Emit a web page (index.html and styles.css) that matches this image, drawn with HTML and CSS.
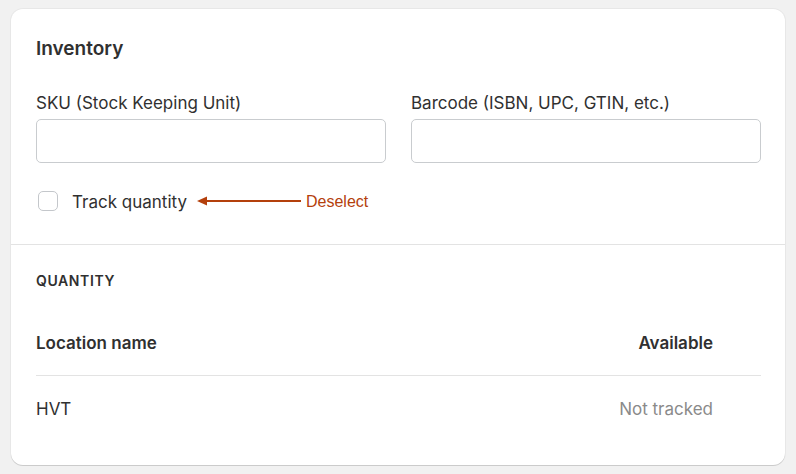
FILE: index.html
```html
<!DOCTYPE html>
<html lang="en">
<head>
    <meta charset="UTF-8">
    <meta name="viewport" content="width=device-width, initial-scale=1.0">
    <title>Inventory</title>
    <link rel="stylesheet" href="styles.css">
</head>
<body>
    <div class="card">
        <div class="section">
            <h2>Inventory</h2>
            <div class="fields">
                <div class="field">
                    <label>SKU (Stock Keeping Unit)</label>
                    <div class="input"></div>
                </div>
                <div class="field">
                    <label>Barcode (ISBN, UPC, GTIN, etc.)</label>
                    <div class="input"></div>
                </div>
            </div>
            <div class="check-row">
                <span class="checkbox"></span>
                <span class="check-label">Track quantity</span>
                <svg class="arrow" width="104" height="10" viewBox="0 0 104 10">
                    <path d="M0 5 L10 0.5 L10 9.5 Z" fill="#b4400c"/>
                    <line x1="8" y1="5" x2="104" y2="5" stroke="#b4400c" stroke-width="2"/>
                </svg>
                <span class="note">Deselect</span>
            </div>
        </div>
        <div class="section quantity">
            <h3>Quantity</h3>
            <div class="table">
                <div class="row head">
                    <span>Location name</span>
                    <span class="right">Available</span>
                </div>
                <div class="row">
                    <span>HVT</span>
                    <span class="right muted">Not tracked</span>
                </div>
            </div>
        </div>
    </div>
</body>
</html>
```

FILE: styles.css
```css
body {
    margin: 0;
    padding: 9px 11px;
    background-color: #f1f1f1;
    font-family: Inter, "Noto Sans", sans-serif;
    color: #303030;
}

.card {
    background-color: #fff;
    border-radius: 12px;
    box-shadow: 0 1px 0 rgba(0, 0, 0, 0.12), 0 0 0 1px rgba(0, 0, 0, 0.04);
    height: 456px;
    box-sizing: border-box;
}

.section {
    padding: 28px 24px 33px 25px;
}

h2 {
    margin: 0;
    font-size: 19px;
    font-weight: 600;
    line-height: 24px;
}

.fields {
    display: grid;
    grid-template-columns: 1fr 1fr;
    gap: 25px;
    margin-top: 32px;
}

.field label {
    display: block;
    font-size: 17px;
    line-height: 20px;
    margin-bottom: 6px;
}

.input {
    height: 44px;
    box-sizing: border-box;
    border: 1px solid #c9cccf;
    border-radius: 5px;
}

.check-row {
    display: flex;
    align-items: center;
    margin-top: 28px;
    height: 20px;
}

.checkbox {
    width: 20px;
    height: 20px;
    box-sizing: border-box;
    border: 1.5px solid #c4c7cb;
    border-radius: 5px;
    margin-left: 2px;
}

.check-label {
    font-size: 17px;
    margin-left: 14px;
    position: relative;
    top: 1px;
}

.arrow {
    margin-left: 10px;
}

.note {
    font-family: "Liberation Sans", Arial, sans-serif;
    font-size: 16px;
    color: #b4400c;
    margin-left: 5px;
    position: relative;
    top: 1px;
}

.quantity {
    border-top: 1px solid #e3e3e3;
    padding-top: 28px;
    padding-bottom: 0;
}

h3 {
    margin: 0 0 22px;
    font-size: 14px;
    font-weight: 600;
    line-height: 16px;
    text-transform: uppercase;
    letter-spacing: 0.6px;
}

.row {
    display: flex;
    justify-content: space-between;
    font-size: 17px;
    line-height: 20px;
    padding: 22px 48px 22px 0;
}

.row.head {
    font-weight: 600;
    border-bottom: 1px solid #e3e3e3;
}

.row + .row {
    padding-top: 23px;
}

.muted {
    color: #8a8a8a;
}
```
